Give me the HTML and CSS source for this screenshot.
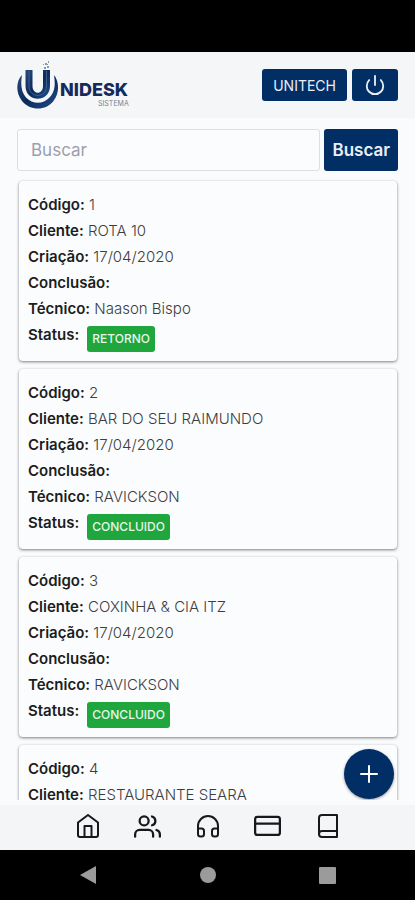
FILE: index.html
```html
<!DOCTYPE html>
<html lang="pt-BR">
<head>
<meta charset="utf-8">
<meta name="viewport" content="width=device-width, initial-scale=1">
<title>Unidesk Sistema</title>
<link rel="stylesheet" href="styles.css">
</head>
<body>
<div class="status-bar"></div>
<header class="header">
  <a href="#" class="logo" aria-label="Unidesk Sistema">
    <svg width="114" height="52" viewBox="0 0 114 52">
      <defs>
        <linearGradient id="mark" x1="0" x2="1" y1="0" y2="1">
          <stop offset="0" stop-color="#28477a"/><stop offset=".5" stop-color="#0c2a5c"/><stop offset="1" stop-color="#205088"/>
        </linearGradient>
      </defs>
      <path d="M5 16C-1 22-1.500 34 5 42C13 52 29 52 36.500 42C43 34 42 22 37 16C38.500 26 38 33 32.500 38.500C26 45.500 15.500 45.500 9 38.500C4 33 3.500 25 5 16Z" fill="url(#mark)"/>
      <path d="M8.500 11H15.500V27C15.500 36 26 36 26 27V11H33V27C33 44 8.500 44 8.500 27Z" fill="url(#mark)"/>
      <path d="M12 12V27C12 39.500 29.500 39.500 29.500 27V12" fill="none" stroke="#5c7ba2" stroke-width=".6"/>
      <path d="M27 8h2v2h-2zM30 7h2v2h-2zM28 4h2v2h-2zM31 2h1v2h-1zM26 5h1v1h-1zM30 5h1v1h-1z" fill="#8797ad"/>
      <text class="logo-name" x="43" y="37">NIDESK</text>
      <text class="logo-sub" x="81" y="47">SISTEMA</text>
    </svg>
  </a>
  <div class="header-actions">
    <button type="button" class="button">UNITECH</button>
    <button type="button" class="button button-icon" aria-label="Sair">
      <svg width="22" height="22" viewBox="0 0 24 24" fill="none" stroke="currentColor" stroke-width="2" stroke-linecap="round" stroke-linejoin="round"><path d="M18.360 6.640a9 9 0 1 1-12.730 0"/><path d="M12 2v10"/></svg>
    </button>
  </div>
</header>
<main class="main">
  <form class="search">
    <input class="search-input" type="search" placeholder="Buscar" aria-label="Buscar">
    <button type="button" class="button search-button">Buscar</button>
  </form>
  <section class="cards">
    <article class="card">
      <p><b>Código:</b> 1</p>
      <p><b>Cliente:</b> ROTA 10</p>
      <p><b>Criação:</b> 17/04/2020</p>
      <p><b>Conclusão:</b></p>
      <p><b>Técnico:</b> Naason Bispo</p>
      <p class="status"><b>Status:</b> <span class="badge">RETORNO</span></p>
    </article>
    <article class="card">
      <p><b>Código:</b> 2</p>
      <p><b>Cliente:</b> BAR DO SEU RAIMUNDO</p>
      <p><b>Criação:</b> 17/04/2020</p>
      <p><b>Conclusão:</b></p>
      <p><b>Técnico:</b> RAVICKSON</p>
      <p class="status"><b>Status:</b> <span class="badge">CONCLUIDO</span></p>
    </article>
    <article class="card">
      <p><b>Código:</b> 3</p>
      <p><b>Cliente:</b> COXINHA &amp; CIA ITZ</p>
      <p><b>Criação:</b> 17/04/2020</p>
      <p><b>Conclusão:</b></p>
      <p><b>Técnico:</b> RAVICKSON</p>
      <p class="status"><b>Status:</b> <span class="badge">CONCLUIDO</span></p>
    </article>
    <article class="card">
      <p><b>Código:</b> 4</p>
      <p><b>Cliente:</b> RESTAURANTE SEARA</p>
    </article>
  </section>
  <button type="button" class="fab" aria-label="Adicionar">
    <svg width="24" height="24" viewBox="0 0 24 24" fill="none" stroke="currentColor" stroke-width="2" stroke-linecap="round"><path d="M12 4v16M4 12h16"/></svg>
  </button>
</main>
<nav class="tabs">
  <a href="#" aria-label="Início"><svg class="icon" viewBox="0 0 24 24"><path d="M2 8.500 12 1l10 7.500V21a2 2 0 0 1-2 2H4a2 2 0 0 1-2-2z"/><path d="M8.500 23V12h7v11"/></svg></a>
  <a href="#" aria-label="Clientes"><svg class="icon icon-wide" viewBox="0 0 24 24"><path d="M17 21v-2a4 4 0 0 0-4-4H5a4 4 0 0 0-4 4v2"/><circle cx="9" cy="7" r="4"/><path d="M23 21v-2a4 4 0 0 0-3-3.870M16 3.130a4 4 0 0 1 0 7.750"/></svg></a>
  <a href="#" aria-label="Atendimento"><svg class="icon" viewBox="0 0 24 24"><path d="M2 19v-7a10 10 0 0 1 20 0v7"/><path d="M22 20a2.500 2.500 0 0 1-2.500 2.500H18.500A2.500 2.500 0 0 1 16 20v-3a2.500 2.500 0 0 1 2.500-2.500H22zM2 20a2.500 2.500 0 0 0 2.500 2.500h1A2.500 2.500 0 0 0 8 20v-3a2.500 2.500 0 0 0-2.500-2.500H2z"/></svg></a>
  <a href="#" aria-label="Pagamentos"><svg class="icon icon-wide" viewBox="0 0 24 24"><rect x="1" y="3.500" width="22" height="16" rx="2"/><path d="M1 9.500h22"/></svg></a>
  <a href="#" aria-label="Manual"><svg class="icon" viewBox="0 0 24 24"><path d="M3 20a3 3 0 0 1 3-3h15"/><path d="M6 1h15v22H6a3 3 0 0 1-3-3V4a3 3 0 0 1 3-3z"/></svg></a>
</nav>
<footer class="system-bar">
  <svg width="18" height="20" viewBox="0 0 18 20"><path d="M1 10 17 1v18z"/></svg>
  <svg width="18" height="20" viewBox="0 0 18 20"><circle cx="9" cy="10" r="8"/></svg>
  <svg width="18" height="20" viewBox="0 0 18 20"><rect x="0" y="2" width="17" height="17" rx="1"/></svg>
</footer>
</body>
</html>
```
FILE: styles.css
```css
* {
  box-sizing: border-box;
}

body {
  margin: 0;
  height: 100vh;
  display: flex;
  flex-direction: column;
  background: #fafbfd;
  color: #16181c;
  font-family: Inter, "Open Sans", sans-serif;
  font-size: 15px;
}

.status-bar {
  height: 52px;
  flex: none;
  background: #000;
}

.header {
  display: flex;
  flex: none;
  align-items: center;
  justify-content: space-between;
  height: 66px;
  padding: 0 17px;
  background: #f4f6f8;
}

.logo {
  display: flex;
}

.logo-name {
  font-size: 18px;
  font-weight: 800;
  fill: #142b5c;
}

.logo-sub {
  font-size: 7px;
  fill: #7b8290;
}

.header-actions {
  display: flex;
  gap: 5px;
}

.button {
  display: flex;
  align-items: center;
  justify-content: center;
  height: 32px;
  padding: 0 11px;
  border: 0;
  border-radius: 3px;
  background: #022e66;
  color: #e9eef6;
  font: inherit;
  font-size: 14px;
}

.button-icon {
  width: 46px;
}

.main {
  position: relative;
  flex: 1;
  min-height: 0;
  margin-bottom: 5px;
  padding: 11px 17px 0;
  overflow: hidden;
}

.search {
  display: flex;
  gap: 4px;
  margin-bottom: 10px;
}

.search-input {
  flex: 1;
  min-width: 0;
  height: 42px;
  padding: 0 13px;
  border: 1px solid #dcdee2;
  border-radius: 3px;
  background: #fbfcfd;
  font: inherit;
  font-size: 17px;
}

.search-input::placeholder {
  color: #9b9eae;
  opacity: 1;
}

.search-button {
  height: 42px;
  padding: 0 8px;
  font-size: 17px;
  font-weight: 600;
}

.cards {
  display: flex;
  flex-direction: column;
  gap: 8px;
  padding: 0 1px 0 2px;
}

.card {
  flex: none;
  min-height: 180px;
  padding: 11px 9px 8px;
  border-radius: 4px;
  background: #fbfcfd;
  box-shadow: 0 1px 3px rgba(0, 0, 0, 0.5);
}

.card p {
  margin: 0;
  line-height: 26px;
  font-weight: 300;
  color: #3c3d42;
}

.card b {
  font-weight: 600;
  color: #1c1d21;
}

.card .status {
  display: flex;
  gap: 8px;
}

.badge {
  margin-top: 4px;
  padding: 0 5px;
  border-radius: 3px;
  background: #1fa63c;
  color: #e6f6e9;
  font-size: 12px;
  font-weight: 500;
}

.fab {
  position: absolute;
  right: 21px;
  bottom: 1px;
  display: flex;
  align-items: center;
  justify-content: center;
  width: 50px;
  height: 50px;
  padding: 0;
  border: 0;
  border-radius: 50%;
  background: #022e66;
  color: #fff;
  box-shadow: 0 1px 3px rgba(0, 0, 0, 0.4);
}

.tabs {
  display: flex;
  flex: none;
  align-items: center;
  justify-content: center;
  height: 45px;
  padding-bottom: 3px;
  background: #f3f5f7;
}

.tabs a {
  display: flex;
  align-items: center;
  justify-content: center;
  width: 60px;
  color: #16181c;
}

.icon {
  width: 24px;
  height: 24px;
  fill: none;
  stroke: currentColor;
  stroke-width: 2;
  stroke-linecap: round;
  stroke-linejoin: round;
}

.icon-wide {
  width: 27px;
  height: 27px;
}

.system-bar {
  display: flex;
  flex: none;
  align-items: center;
  justify-content: center;
  gap: 102px;
  height: 50px;
  background: #000;
  fill: #9b9b9b;
}
```
